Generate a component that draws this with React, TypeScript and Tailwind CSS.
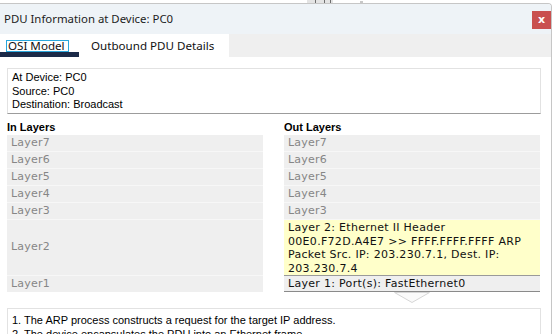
import React from 'react';

const layerRows = ['Layer7', 'Layer6', 'Layer5', 'Layer4', 'Layer3'];

const uiFont = { fontFamily: '"Noto Sans", "Open Sans", sans-serif' };
const arialFont = { fontFamily: '"Liberation Sans", Arial, sans-serif' };
const verdanaFont = { fontFamily: '"DejaVu Sans", Verdana, sans-serif' };

const GrayRow: React.FC<{ label: string }> = ({ label }) => (
  <div className="h-[16px] bg-[#efefef] pl-[4px] text-[11px] leading-[16px] tracking-[0.2px] text-[#868686]" style={verdanaFont}>
    {label}
  </div>
);

const App: React.FC = () => {
  return (
    <div className="w-[554px] h-[334px] overflow-hidden bg-white flex flex-col">
      {/* bit of the app behind the dialog */}
      <div className="h-[3px] flex shrink-0">
        <div className="ml-[307px] w-[26px] h-[3px] bg-[#e4e4e4] flex">
          <div className="ml-[8px] w-px bg-[#6e6e6e]" />
          <div className="ml-[8px] w-px bg-[#6e6e6e]" />
          <div className="ml-[5px] w-px bg-[#6e6e6e]" />
        </div>
        <div className="ml-[27px] mt-[1px] w-[3px] h-[2px] bg-[#c8c8c8]" />
      </div>

      <div className="w-[552px] flex-1 flex flex-col border-t border-r border-[#c6c6c6] rounded-tr-[4px] overflow-hidden">
        {/* Title bar */}
        <div className="h-[30px] shrink-0 bg-[#eef3f7] flex items-start justify-between">
          <span className="pl-[4px] pt-[7px] text-[11.4px] leading-[16px] text-[#1c1c1c]" style={uiFont}>
            PDU Information at Device: PC0
          </span>
          <button className="mt-[7px] w-[19px] h-[18px] bg-[#c9504f] text-white text-[11px] font-bold leading-[16px] flex items-center justify-center" style={verdanaFont}>
            x
          </button>
        </div>

        {/* Tabs */}
        <div className="h-[23px] shrink-0 bg-[#efefef] flex" style={uiFont}>
          <div className="relative w-[79px] bg-white">
            <div className="absolute left-[6px] top-[6px] w-[63px] h-[12px] border border-[#2aa7dc]" />
            <span className="absolute left-[8px] top-[4px] text-[11.6px] leading-[16px] text-[#111]">OSI Model</span>
            <div className="absolute left-0 bottom-0 w-[79px] h-[5px] bg-[#1b2a48]" />
          </div>
          <div className="w-[150px] bg-white pl-[12px] pt-[4px] text-[11.6px] leading-[16px] text-[#111]">
            Outbound PDU Details
          </div>
        </div>

        {/* Content */}
        <div className="flex-1 bg-white pl-[7px] pr-[10px] flex flex-col">
          <div
            className="mt-[11px] h-[46px] border-t border-l border-r border-b border-t-[#e2e2e2] border-l-[#e2e2e2] border-r-[#e2e2e2] border-b-[#9c9c9c] pl-[4px] pt-[2px] text-[11px] leading-[13.5px] text-black"
            style={arialFont}
          >
            <div>At Device: PC0</div>
            <div>Source: PC0</div>
            <div>Destination: Broadcast</div>
          </div>

          <div className="mt-[6px] grid grid-cols-[256px_256px] gap-x-[21px]">
            {/* In layers */}
            <div className="flex flex-col">
              <div className="h-[15px] text-[11px] font-bold leading-[14px] text-black" style={arialFont}>
                In Layers
              </div>
              <div className="flex flex-col gap-px bg-[#f7f7f7]">
                {layerRows.map((l) => (
                  <GrayRow key={l} label={l} />
                ))}
                <div className="h-[55px] bg-[#efefef] pl-[4px] flex items-center text-[11px] tracking-[0.2px] text-[#868686]" style={verdanaFont}>
                  Layer2
                </div>
                <GrayRow label="Layer1" />
              </div>
            </div>

            {/* Out layers */}
            <div className="flex flex-col">
              <div className="h-[15px] text-[11px] font-bold leading-[14px] text-black" style={arialFont}>
                Out Layers
              </div>
              <div className="flex flex-col gap-px bg-[#f7f7f7]">
                {layerRows.map((l) => (
                  <GrayRow key={l} label={l} />
                ))}
                <div className="h-[55px] bg-[#ffffca] pl-[4px] pt-[1px] text-[11px] leading-[13.5px] tracking-[0.3px] text-[#111] whitespace-nowrap" style={verdanaFont}>
                  <div>Layer 2: Ethernet II Header</div>
                  <div>00E0.F72D.A4E7 &gt;&gt; FFFF.FFFF.FFFF ARP</div>
                  <div>Packet Src. IP: 203.230.7.1, Dest. IP:</div>
                  <div>203.230.7.4</div>
                </div>
                <div
                  className="-mt-px h-[17px] border-t border-b border-t-[#9a9a9a] border-b-[#8a8a8a] bg-[#efefef] pl-[4px] text-[11px] leading-[15px] tracking-[0.3px] text-[#111]"
                  style={verdanaFont}
                >
                  Layer 1: Port(s): FastEthernet0
                </div>
              </div>
              <div className="flex justify-center">
                <svg width="36" height="11" viewBox="0 0 36 11" className="ml-[-1px]">
                  <polygon points="0.5,0.5 35.5,0.5 18,10.5" fill="#fafafa" stroke="#d6d6d6" strokeWidth="1" />
                </svg>
              </div>
            </div>
          </div>

          <div
            className="mt-[5px] flex-1 border border-[#e2e2e2] pl-[4px] pt-[5px] text-[11px] leading-[13.5px] text-black"
            style={arialFont}
          >
            <div>1. The ARP process constructs a request for the target IP address.</div>
            <div>2. The device encapsulates the PDU into an Ethernet frame.</div>
          </div>
        </div>
      </div>
    </div>
  );
};

export default App;
